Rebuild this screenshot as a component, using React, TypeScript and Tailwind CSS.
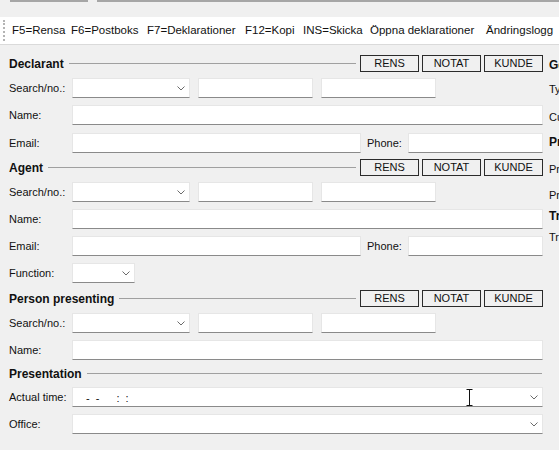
import React from 'react';

const font = { fontFamily: '"Liberation Sans", Arial, sans-serif' };

const toolbarItems: { label: string; w: string }[] = [
  { label: 'F5=Rensa', w: 'w-[59px]' },
  { label: 'F6=Postboks', w: 'w-[76px]' },
  { label: 'F7=Deklarationer', w: 'w-[98px]' },
  { label: 'F12=Kopi', w: 'w-[58px]' },
  { label: 'INS=Skicka', w: 'w-[67px]' },
  { label: 'Öppna deklarationer', w: 'w-[116px]' },
  { label: 'Ändringslogg', w: 'w-[90px]' },
];

function Chevron() {
  return (
    <svg width="8" height="5" viewBox="0 0 8 5" className="shrink-0">
      <polyline points="0.5,0.5 4,4 7.5,0.5" fill="none" stroke="#6b6b6b" strokeWidth="1" />
    </svg>
  );
}

function Input({ className = '' }: { className?: string }) {
  return (
    <div
      className={`h-[20px] border border-[#e6e6e6] border-b-[#8a8a8a] bg-white ${className}`}
    />
  );
}

function Combo({ className = '', children }: { className?: string; children?: React.ReactNode }) {
  return (
    <div
      className={`relative flex h-[20px] items-center border border-[#e6e6e6] border-b-[#8a8a8a] bg-white pr-[4px] ${className}`}
    >
      <div className="flex-1 whitespace-pre">{children}</div>
      <Chevron />
    </div>
  );
}

function Header({ title, buttons = true, mt }: { title: string; buttons?: boolean; mt: string }) {
  return (
    <div className={`flex h-[17px] items-center ${mt}`}>
      <span className="text-[12px] font-bold text-[#111]">{title}</span>
      <div className={`ml-[5px] h-px flex-1 bg-[#a0a0a0] ${buttons ? '' : 'mr-px'}`} />
      {buttons && (
        <div className="ml-[4px] flex gap-[3px]">
          {['RENS', 'NOTAT', 'KUNDE'].map((b) => (
            <div
              key={b}
              className="flex h-[17px] w-[59px] items-center justify-center border border-[#2b2b2b] bg-[#f0f0f0] text-[11px] text-[#111]"
            >
              {b}
            </div>
          ))}
        </div>
      )}
    </div>
  );
}

function Row({ label, mt, children }: { label: string; mt: string; children: React.ReactNode }) {
  return (
    <div className={`flex h-[20px] items-center ${mt}`}>
      <div className="w-[63px] shrink-0 text-[11px] text-[#111]">{label}</div>
      {children}
    </div>
  );
}

function SearchRow({ mt }: { mt: string }) {
  return (
    <Row label="Search/no.:" mt={mt}>
      <Combo className="w-[118px]" />
      <Input className="ml-[8px] w-[115px]" />
      <Input className="ml-[8px] w-[115px]" />
    </Row>
  );
}

function EmailRow({ mt }: { mt: string }) {
  return (
    <Row label="Email:" mt={mt}>
      <Input className="w-[289px]" />
      <div className="ml-[6px] w-[41px] text-[11px] text-[#111]">Phone:</div>
      <Input className="flex-1" />
    </Row>
  );
}

export default function App() {
  return (
    <div className="h-[450px] w-[559px] overflow-hidden bg-[#f0f0f0] text-[#111]" style={font}>
      {/* tab remnants */}
      <div className="flex h-[17px] items-start">
        <div className="ml-[10px] h-[2px] w-[78px] bg-[#a6a6a6]" />
        <div className="ml-[9px] h-[2px] flex-1 bg-[#a6a6a6]" />
      </div>

      {/* toolbar */}
      <div className="flex h-[28px] items-center border-b border-[#dadada] bg-white">
        <div className="ml-[3px] h-[21px] w-0 border-l-2 border-dotted border-[#b4b4b4]" />
        <div className="ml-[7px] flex whitespace-nowrap text-[11.5px] text-[#111]">
          {toolbarItems.map((t) => (
            <span key={t.label} className={`${t.w} shrink-0`}>
              {t.label}
            </span>
          ))}
        </div>
      </div>

      <div className="flex">
        {/* form */}
        <div className="flex w-[543px] shrink-0 flex-col pl-[9px]">
          <Header title="Declarant" mt="mt-[10px]" />
          <SearchRow mt="mt-[6px]" />
          <Row label="Name:" mt="mt-[7px]">
            <Input className="flex-1" />
          </Row>
          <EmailRow mt="mt-[8px]" />

          <Header title="Agent" mt="mt-[6px]" />
          <SearchRow mt="mt-[6px]" />
          <Row label="Name:" mt="mt-[7px]">
            <Input className="flex-1" />
          </Row>
          <EmailRow mt="mt-[7px]" />
          <Row label="Function:" mt="mt-[7px]">
            <Combo className="w-[63px]" />
          </Row>

          <Header title="Person presenting" mt="mt-[7px]" />
          <SearchRow mt="mt-[6px]" />
          <Row label="Name:" mt="mt-[7px]">
            <Input className="flex-1" />
          </Row>

          <Header title="Presentation" buttons={false} mt="mt-[5px]" />
          <Row label="Actual time:" mt="mt-[5px]">
            <Combo className="flex-1">
              <span className="ml-[13px] text-[11px]">{'-  -'}</span>
              <span className="ml-[17px] text-[11px]">{':  :'}</span>
              <svg
                width="7"
                height="17"
                viewBox="0 0 7 17"
                className="absolute left-[393px] top-[1px]"
              >
                <path d="M0.5 0.5h6M3.5 0.5v16M0.5 16.5h6" stroke="#111" strokeWidth="1" fill="none" />
              </svg>
            </Combo>
          </Row>
          <Row label="Office:" mt="mt-[7px]">
            <Combo className="flex-1" />
          </Row>
        </div>

        {/* right column, cut off */}
        <div className="ml-[6px] flex flex-col whitespace-nowrap text-[11px] text-[#111]">
          <div className="mt-[11px] h-[14px] text-[12px] font-bold">General</div>
          <div className="mt-[11px] h-[14px]">Type:</div>
          <div className="mt-[14px] h-[14px]">Currency:</div>
          <div className="mt-[10px] h-[14px] text-[12px] font-bold">Procedure</div>
          <div className="mt-[14px] h-[14px]">Procedure:</div>
          <div className="mt-[12px] h-[14px]">Previous:</div>
          <div className="mt-[6px] h-[14px] text-[12px] font-bold">Transport</div>
          <div className="mt-[8px] h-[14px]">Transport mode:</div>
        </div>
      </div>
    </div>
  );
}
